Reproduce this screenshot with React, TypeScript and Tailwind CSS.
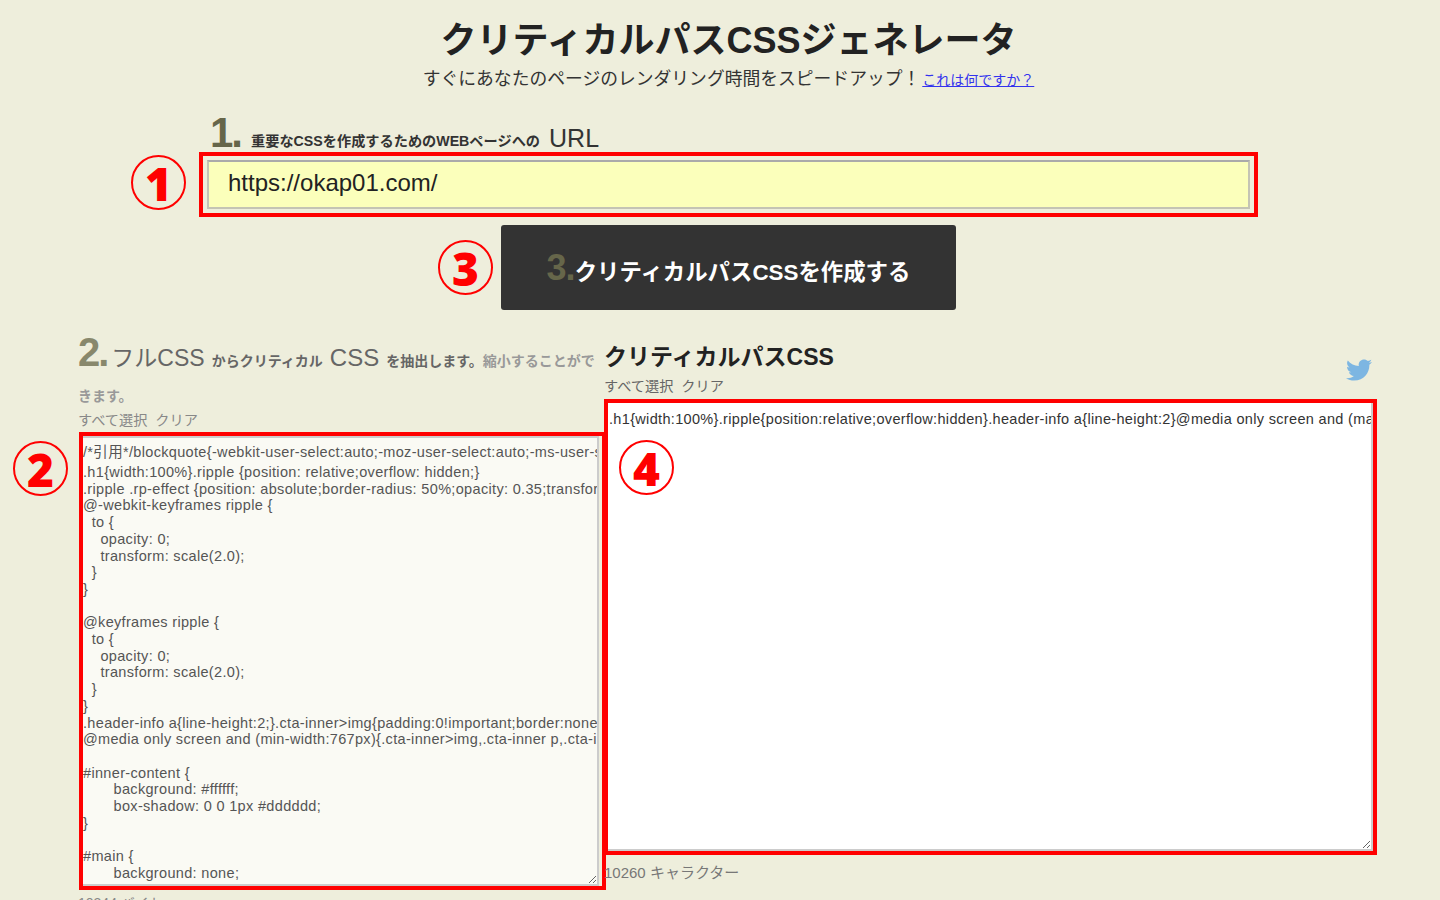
import React from 'react';
import { FaTwitter } from 'react-icons/fa';

const fullCssFirst = '/*引用*/blockquote{-webkit-user-select:auto;-moz-user-select:auto;-ms-user-select:auto;user-select:auto;}';

const fullCss = `.h1{width:100%}.ripple {position: relative;overflow: hidden;}
.ripple .rp-effect {position: absolute;border-radius: 50%;opacity: 0.35;transform: scale(0);}
@-webkit-keyframes ripple {
  to {
    opacity: 0;
    transform: scale(2.0);
  }
}

@keyframes ripple {
  to {
    opacity: 0;
    transform: scale(2.0);
  }
}
.header-info a{line-height:2;}.cta-inner>img{padding:0!important;border:none;}
@media only screen and (min-width:767px){.cta-inner>img,.cta-inner p,.cta-inner a{float:none}}

#inner-content {
       background: #ffffff;
       box-shadow: 0 0 1px #dddddd;
}

#main {
       background: none;`;

const criticalCss =
  '.h1{width:100%}.ripple{position:relative;overflow:hidden}.header-info a{line-height:2}@media only screen and (max-width:767px){.cta-inner{float:none}}';

const Marker = ({ n, className }: { n: string; className: string }) => (
  <div
    className={`absolute w-[55px] h-[55px] rounded-full border-2 border-[#f00] flex items-center justify-center font-['Noto_Sans',sans-serif] text-[46px] font-black leading-none text-[#f00] ${className}`}
  >
    {n}
  </div>
);

const App: React.FC = () => {
  return (
    <div className="relative h-screen overflow-hidden bg-[#eeeedc] text-[#333] font-['Liberation_Sans','Noto_Sans_CJK_JP',sans-serif]">
      <div className="pt-[16px] pl-[17px] text-center">
        <h1 className="text-[36px] leading-[50px] font-bold text-[#222]">クリティカルパスCSSジェネレータ</h1>
        <p className="h-[26px] text-[17.8px] leading-[26px] text-[#333]">
          すぐにあなたのページのレンダリング時間をスピードアップ！
          <a href="#" className="ml-[2px] text-[14px] text-[#3333ee] underline">これは何ですか？</a>
        </p>
      </div>

      <div className="relative mt-[26px] ml-[199px] w-[1059px]">
        <div className="flex items-end h-[34px] pl-[11px] text-[#333]">
          <span className="mb-[2px] text-[42px] leading-[34px] font-bold tracking-[-2px] text-[#66664a]">1.</span>
          <span className="ml-[10px] mb-[1px] text-[14.2px] leading-[20px] font-bold">重要なCSSを作成するためのWEBページへの</span>
          <span className="ml-[9px] text-[25px] leading-[28px]">URL</span>
        </div>
        <div className="h-[65px] border-4 border-[#f00] p-[4px]">
          <input
            readOnly
            value="https://okap01.com/"
            className="w-full h-full bg-[#fbffbb] border-2 border-[#c4c4b4] border-t-[#aaa] pl-[19px] pb-[4px] text-[24px] text-[#222] outline-none"
          />
        </div>
        <Marker n="1" className="left-[-68px] top-[37px]" />
      </div>

      <div className="relative mt-[8px] ml-[501px] w-[455px] h-[85px] pt-[10px] rounded-[3px] bg-[#333] flex items-center justify-center font-bold text-white">
        <span className="mb-[10px] text-[36px] tracking-[-1px] text-[#66664a]">3.</span>
        <span className="text-[22.4px]">クリティカルパスCSSを作成する</span>
        <Marker n="3" className="left-[-63px] top-[15px]" />
      </div>

      <div className="flex mt-[25px] ml-[79px]">
        <div className="relative w-[527px]">
          <h2 className="-ml-[1px] text-[14px] font-bold leading-[35px] text-[#666]">
            <span className="text-[40px] leading-[35px] tracking-[-2px] text-[#88886c]">2.</span>
            <span className="ml-[4px] text-[23px] leading-[35px] font-normal">フルCSS</span>
            <span className="ml-[7px]">からクリティカル</span>
            <span className="mx-[7px] text-[24px] leading-[35px] font-normal">CSS</span>
            <span>を抽出します。</span>
            <span className="text-[#999]">縮小することができます。</span>
          </h2>
          <div className="-ml-[1px] -mt-[4px] text-[14.2px] leading-[20px] text-[#888]">すべて選択&nbsp;&nbsp;クリア</div>
          <div className="mt-[2px] h-[458px] border-4 border-[#f00]">
            <div className="w-[calc(100%-3px)] h-full resize overflow-hidden whitespace-pre bg-[#fafaf4] border-2 border-l-0 border-[#ccc] pt-[3px] text-[14.5px] leading-[16.7px] tracking-[0.33px] text-[#555]">
              <div className="leading-[23px]">{fullCssFirst}</div>
              {fullCss}
            </div>
          </div>
          <Marker n="2" className="left-[-66px] top-[106px]" />
          <div className="mt-[3px] -ml-[1px] text-[14px] leading-[20px] text-[#888]">10344 バイト</div>
        </div>

        <div className="relative w-[773px] -ml-[2px] -mt-[3px]">
          <div className="flex items-start justify-between h-[44px] pr-[5px]">
            <h2 className="pt-[6px] text-[23px] leading-[38px] font-bold text-[#222]">クリティカルパスCSS</h2>
            <FaTwitter className="mt-[25px] text-[26px] text-[#7db6e2]" />
          </div>
          <div className="text-[14.2px] leading-[20px] text-[#666]">すべて選択&nbsp;&nbsp;クリア</div>
          <div className="mt-[3px] h-[456px] border-4 border-[#f00]">
            <textarea
              readOnly
              wrap="off"
              defaultValue={criticalCss}
              className="block w-full h-full resize overflow-hidden bg-white border-2 border-t-0 border-l-0 border-[#ccc] pt-[8px] pl-[1px] text-[14.5px] leading-[normal] tracking-[0.33px] text-[#333] outline-none"
            />
          </div>
          <div className="mt-[8px] text-[15px] leading-[20px] text-[#777]">10260 キャラクター</div>
          <Marker n="4" className="left-[15px] top-[108px]" />
        </div>
      </div>
    </div>
  );
};

export default App;
